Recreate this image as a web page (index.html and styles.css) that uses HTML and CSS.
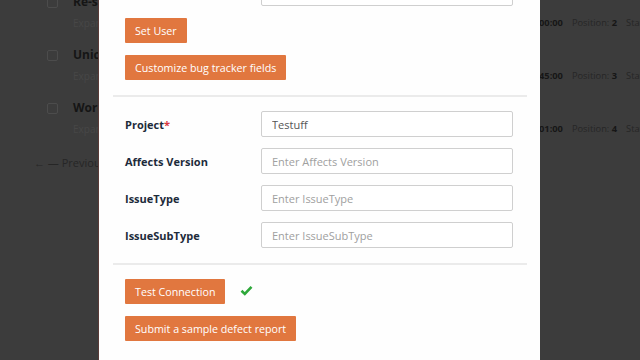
FILE: index.html
```html
<!DOCTYPE html>
<html>
<head>
    <title>Bug tracker settings</title>
    <link rel="stylesheet" href="styles.css">
</head>
<body>
    <div class="page">
        <div class="test-row">
            <span class="box"></span>
            <div class="test-text">
                <div class="test-title">Re-save document</div>
                <div class="test-sub">Expand this step to view details</div>
            </div>
            <div class="test-meta"><b>00:00</b><span>Position: <b>2</b></span><span>Status</span></div>
        </div>
        <div class="test-row">
            <span class="box"></span>
            <div class="test-text">
                <div class="test-title">Unicode characters</div>
                <div class="test-sub">Expand this step to view details</div>
            </div>
            <div class="test-meta"><b>45:00</b><span>Position: <b>3</b></span><span>Status</span></div>
        </div>
        <div class="test-row">
            <span class="box"></span>
            <div class="test-text">
                <div class="test-title">Word wrap</div>
                <div class="test-sub">Expand this step to view details</div>
            </div>
            <div class="test-meta"><b>01:00</b><span>Position: <b>4</b></span><span>Status</span></div>
        </div>
        <div class="pager">&larr; &mdash; Previous</div>
    </div>

    <div class="overlay">
        <div class="modal">
            <div class="section">
                <div class="field">
                    <label></label>
                    <input type="text" class="input">
                </div>
                <button class="btn">Set User</button>
                <button class="btn">Customize bug tracker fields</button>
            </div>
            <hr class="sep">
            <div class="section rows">
                <div class="field">
                    <label>Project<span class="req">*</span></label>
                    <input type="text" class="input" value="Testuff">
                </div>
                <div class="field">
                    <label>Affects Version</label>
                    <input type="text" class="input" placeholder="Enter Affects Version">
                </div>
                <div class="field">
                    <label>IssueType</label>
                    <input type="text" class="input" placeholder="Enter IssueType">
                </div>
                <div class="field">
                    <label>IssueSubType</label>
                    <input type="text" class="input" placeholder="Enter IssueSubType">
                </div>
            </div>
            <hr class="sep">
            <div class="section actions">
                <div class="btn-line">
                    <button class="btn">Test Connection</button>
                    <svg class="check" width="13" height="11" viewBox="0 0 13 11">
                        <path d="M1.5 5.8 L4.8 9 L11.5 1.8" fill="none" stroke="#2ea83a" stroke-width="2.6"/>
                    </svg>
                </div>
                <button class="btn">Submit a sample defect report</button>
            </div>
        </div>
    </div>
</body>
</html>
```

FILE: styles.css
```css
body {
    margin: 0;
    font-family: "Open Sans", Arial, sans-serif;
    background-color: #3c3c3c;
    overflow: hidden;
}

/* dimmed page behind the dialog */
.page {
    margin-top: -25px;
}

.test-row {
    display: flex;
    align-items: flex-start;
    height: 53px;
    padding-left: 47px;
}

.box {
    flex-shrink: 0;
    width: 9px;
    height: 9px;
    border: 1px solid #4c4c4c;
    border-radius: 2px;
    margin-top: 22px;
    margin-right: 15px;
}

.test-text {
    flex-shrink: 0;
    width: 466px;
    padding-top: 18px;
}

.test-title {
    font-size: 12px;
    font-weight: bold;
    color: #151515;
    line-height: 18px;
}

.test-sub {
    font-size: 10px;
    color: #474747;
    line-height: 14px;
    margin-top: 5px;
}

.test-meta {
    display: flex;
    gap: 9px;
    font-size: 9.3px;
    color: #262626;
    padding-top: 41px;
    white-space: nowrap;
}

.test-meta b {
    color: #161616;
}

.pager {
    font-size: 11px;
    color: #262626;
    padding: 21px 0 0 34px;
}

/* dialog */
.overlay {
    position: fixed;
    top: 0;
    left: 0;
    width: 100%;
    height: 100%;
}

.modal {
    position: absolute;
    top: -39px;
    left: 98px;
    width: 441px;
    background-color: #fefefe;
    border-left: 1px solid #5a3b38;
}

.section {
    display: flex;
    flex-direction: column;
    align-items: flex-start;
    gap: 12px;
    padding: 19px 26px 15px 26px;
}

.rows {
    gap: 11px;
    padding-top: 14px;
}

.actions {
    padding-top: 14px;
    padding-bottom: 30px;
}

.field {
    display: flex;
    align-items: center;
    width: 100%;
    height: 26px;
}

.field label {
    width: 136px;
    font-size: 11px;
    font-weight: bold;
    color: #1d2b3b;
}

.req {
    color: #d9363e;
}

.input {
    box-sizing: border-box;
    width: 252px;
    height: 26px;
    padding: 0 10px;
    border: 1px solid #cfcfcf;
    border-radius: 2px;
    font-family: "Open Sans", Arial, sans-serif;
    font-size: 11px;
    color: #555;
    background-color: white;
}

.input::placeholder {
    color: #a0a0a0;
}

.sep {
    margin: 0 13px 0 14px;
    border: none;
    border-top: 2px solid #ebebeb;
}

.btn {
    height: 25px;
    padding: 0 10px;
    border: none;
    border-radius: 1px;
    background-color: #e1773f;
    color: white;
    font-family: "Open Sans", Arial, sans-serif;
    font-size: 10.7px;
}

.btn-line {
    display: flex;
    align-items: center;
    gap: 15px;
}

.check {
    display: block;
    margin-top: -2px;
}
```
